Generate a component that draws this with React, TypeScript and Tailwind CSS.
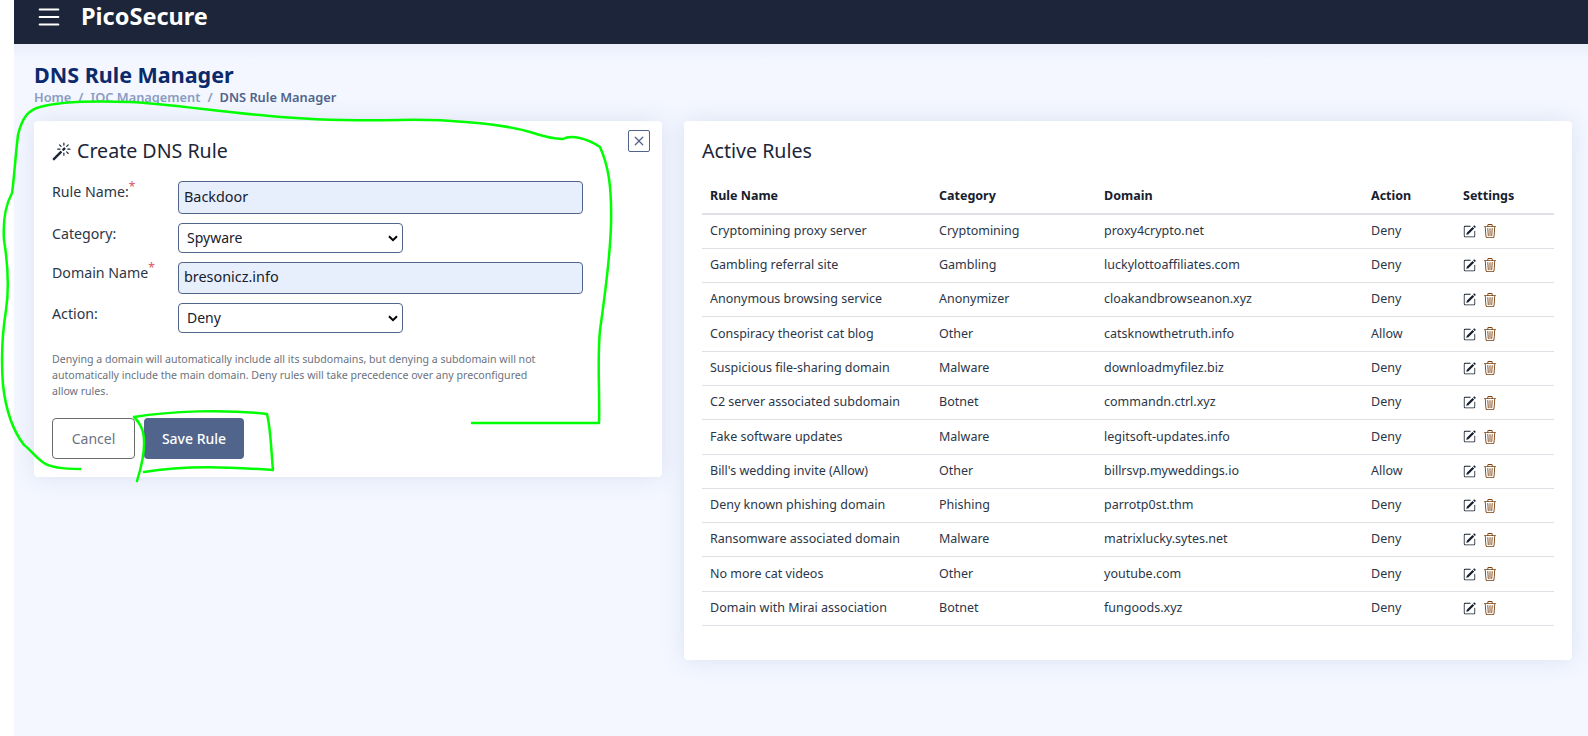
import { BsList, BsMagic, BsPencilSquare, BsTrash3, BsX } from 'react-icons/bs';

const rules = [
  { name: 'Cryptomining proxy server', category: 'Cryptomining', domain: 'proxy4crypto.net', action: 'Deny' },
  { name: 'Gambling referral site', category: 'Gambling', domain: 'luckylottoaffiliates.com', action: 'Deny' },
  { name: 'Anonymous browsing service', category: 'Anonymizer', domain: 'cloakandbrowseanon.xyz', action: 'Deny' },
  { name: 'Conspiracy theorist cat blog', category: 'Other', domain: 'catsknowthetruth.info', action: 'Allow' },
  { name: 'Suspicious file-sharing domain', category: 'Malware', domain: 'downloadmyfilez.biz', action: 'Deny' },
  { name: 'C2 server associated subdomain', category: 'Botnet', domain: 'commandn.ctrl.xyz', action: 'Deny' },
  { name: 'Fake software updates', category: 'Malware', domain: 'legitsoft-updates.info', action: 'Deny' },
  { name: "Bill's wedding invite (Allow)", category: 'Other', domain: 'billrsvp.myweddings.io', action: 'Allow' },
  { name: 'Deny known phishing domain', category: 'Phishing', domain: 'parrotp0st.thm', action: 'Deny' },
  { name: 'Ransomware associated domain', category: 'Malware', domain: 'matrixlucky.sytes.net', action: 'Deny' },
  { name: 'No more cat videos', category: 'Other', domain: 'youtube.com', action: 'Deny' },
  { name: 'Domain with Mirai association', category: 'Botnet', domain: 'fungoods.xyz', action: 'Deny' },
];

function Label({ text, required }: { text: string; required?: boolean }) {
  return (
    <div className="w-[126px] shrink-0 pt-[1px] text-[14.2px] leading-[20px] text-[#2b3648]">
      {text}
      {required && <sup className="text-[#e0525c] text-[12px] leading-none">*</sup>}
    </div>
  );
}

function SelectBox({ value }: { value: string }) {
  return (
    <div className="w-[225px] h-[30px] flex items-center justify-between pl-2 pr-[4px] pb-[2px] bg-white border border-[#50648c] rounded-[4px] text-[14px] text-[#16202e]">
      {value}
      <svg width="10" height="7" viewBox="0 0 10 7" fill="none" stroke="#000" strokeWidth="2" className="mt-[2px]">
        <path d="M1 1.2 L5 5.2 L9 1.2" />
      </svg>
    </div>
  );
}

export default function App() {
  return (
    <div className="relative h-[736px] overflow-hidden bg-white font-['Noto_Sans',sans-serif]">
      <div className="ml-[14px] h-full bg-[#f4f7ff]">
        {/* Top bar */}
        <header className="h-[44px] bg-[#1c2539] flex items-start pl-[20px] text-white">
          <BsList className="w-[30px] h-[30px] mt-[2px]" />
          <span className="ml-[17px] text-[23.5px] leading-[32px] font-bold">PicoSecure</span>
        </header>

        <main className="bg-gradient-to-b from-[#e9eef9] to-[#f4f7ff] to-[16px] pl-[20px] pr-[16px] pt-[18px]">
          <h1 className="text-[21.5px] leading-[26px] font-bold text-[#0b2a6b]">DNS Rule Manager</h1>
          <div className="mt-[1px] text-[12.8px] leading-[16px] font-semibold text-[#8a9cc2]">
            Home<span className="mx-[7px]">/</span>IOC Management<span className="mx-[7px]">/</span>
            <span className="text-[#50648c]">DNS Rule Manager</span>
          </div>

          <div className="mt-[16px] flex items-start gap-[22px]">
            {/* Create form */}
            <section className="relative w-[628px] h-[356px] bg-white rounded-[4px] px-[18px] pt-[17px] shadow-[0_0_24px_rgba(70,100,170,0.14)]">
              <button className="absolute top-[9px] right-[12px] w-[22px] h-[22px] border border-[#50648c] rounded-[2px] flex items-center justify-center text-[#50648c]">
                <BsX className="w-[20px] h-[20px]" />
              </button>
              <h2 className="flex items-center gap-[6px] text-[19.6px] leading-[26px] text-[#1c2539]">
                <BsMagic className="w-[19px] h-[19px]" />
                Create DNS Rule
              </h2>

              <div className="mt-[17px] flex items-start h-[33px]">
                <Label text="Rule Name:" required />
                <div className="w-[405px] h-[33px] flex items-center px-[5px] pb-[2px] bg-[#e8effc] border border-[#50648c] rounded-[4px] text-[14.4px] text-[#16202e]">Backdoor</div>
              </div>
              <div className="mt-[9px] flex items-start">
                <Label text="Category:" />
                <SelectBox value="Spyware" />
              </div>
              <div className="mt-[9px] flex items-start h-[32px]">
                <Label text="Domain Name" required />
                <div className="w-[405px] h-[32px] flex items-center px-[5px] pb-[2px] bg-[#e8effc] border border-[#50648c] rounded-[4px] text-[14.4px] text-[#16202e]">bresonicz.info</div>
              </div>
              <div className="mt-[9px] flex items-start">
                <Label text="Action:" />
                <SelectBox value="Deny" />
              </div>

              <p className="mt-[18px] w-[500px] text-[10.6px] leading-[16px] text-[#6b7280]">
                Denying a domain will automatically include all its subdomains, but denying a subdomain will not automatically include the main domain. Deny rules will take precedence over any preconfigured allow rules.
              </p>

              <div className="mt-[19px] flex gap-[9px]">
                <button className="w-[83px] h-[41px] bg-white border border-[#6b6b6b] rounded-[4px] text-[14px] text-[#6b7280]">Cancel</button>
                <button className="w-[100px] h-[41px] bg-[#50648c] rounded-[4px] text-[14px] font-medium text-white">Save Rule</button>
              </div>
            </section>

            {/* Active rules */}
            <section className="w-[888px] h-[539px] bg-white rounded-[4px] px-[18px] pt-[17px] shadow-[0_0_24px_rgba(70,100,170,0.14)]">
              <h2 className="text-[19.6px] leading-[26px] text-[#1c2539]">Active Rules</h2>
              <table className="mt-[16px] w-[852px] table-fixed text-[12.5px] text-[#2b3648]">
                <thead>
                  <tr className="h-[34px] border-b-2 border-[#dfe1e6] text-left text-[#16202e]">
                    <th className="w-[229px] pl-2 font-bold">Rule Name</th>
                    <th className="w-[165px] pl-[8px] font-bold">Category</th>
                    <th className="w-[267px] pl-[8px] font-bold">Domain</th>
                    <th className="w-[92px] pl-[8px] font-bold">Action</th>
                    <th className="pl-[8px] font-bold">Settings</th>
                  </tr>
                </thead>
                <tbody>
                  {rules.map((r) => (
                    <tr key={r.name} className="h-[34.3px] border-b border-[#dfe1e6]">
                      <td className="pl-2">{r.name}</td>
                      <td className="pl-[8px]">{r.category}</td>
                      <td className="pl-[8px]">{r.domain}</td>
                      <td className="pl-[8px]">{r.action}</td>
                      <td className="pl-[8px]">
                        <div className="flex items-center gap-[7px]">
                          <BsPencilSquare className="w-[13px] h-[13px] text-[#16202e]" />
                          <BsTrash3 className="w-[14px] h-[14px] text-[#7a3f0c]" />
                        </div>
                      </td>
                    </tr>
                  ))}
                </tbody>
              </table>
            </section>
          </div>
        </main>
      </div>

      {/* Green marker scribbles drawn over the screenshot */}
      <svg className="absolute inset-0 pointer-events-none" width="1588" height="736" fill="none" stroke="#00ff00" strokeWidth="2.5" strokeLinecap="round" strokeLinejoin="round">
        <path d="M80 469 C62 469 50 467 44 463 C36 458 30 449 24 445 C14 432 6 412 3 385 C1 360 2 335 6 310 C9 290 8 265 4 240 C3 225 4 208 12 193 C14 180 15 160 18 135 C22 118 28 110 40 107 C60 101 100 101 130 102 C170 104 220 112 270 116 C300 119 340 121 400 120 C440 119 500 123 530 132 C545 137 555 139 563 139 C570 135 585 137 600 147 C608 165 612 185 611 225 C610 260 605 295 600 330 C597 360 600 395 599 423 L472 423" />
        <path d="M137 481 C142 465 146 445 143 432 C141 425 137 420 134 417 C170 411 225 409 267 414 C271 430 271 450 273 470 C230 467 185 465 144 472" />
      </svg>
    </div>
  );
}
